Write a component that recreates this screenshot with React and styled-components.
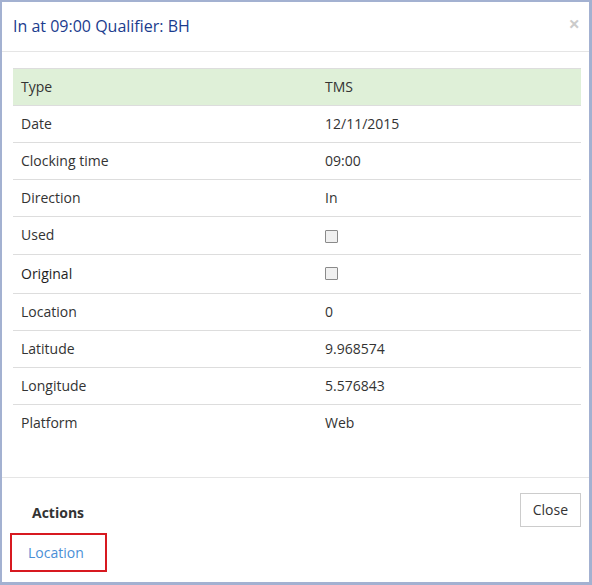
import React from 'react';
import styled, { createGlobalStyle } from 'styled-components';

const GlobalStyle = createGlobalStyle`
  html, body {
    margin: 0;
    padding: 0;
    background: #ffffff;
  }
  body {
    font-family: "Open Sans", "Liberation Sans", sans-serif;
    font-size: 14px;
    line-height: 20px;
    color: #333333;
  }
`;

const Modal = styled.div`
  box-sizing: border-box;
  width: 592px;
  height: 585px;
  border-style: solid;
  border-color: #a3b1d1;
  border-width: 2px 3px 3px 2px;
  background: #ffffff;
  display: flex;
  flex-direction: column;
`;

const Header = styled.div`
  display: flex;
  align-items: center;
  justify-content: space-between;
  height: 50px;
  padding: 0 9px 2px 11px;
  box-sizing: border-box;
  border-bottom: 1px solid #e5e5e5;
`;

const Title = styled.h4`
  margin: 0;
  font-size: 16px;
  font-weight: 400;
  line-height: 20px;
  color: #1b3c8e;
`;

const CloseX = styled.button`
  border: 0;
  background: none;
  padding: 0;
  font-family: "Open Sans", "Liberation Sans", sans-serif;
  font-size: 20px;
  font-weight: 700;
  line-height: 20px;
  color: #000000;
  opacity: 0.2;
  margin-top: -4px;
  cursor: pointer;
`;

const Body = styled.div`
  padding: 16px 8px 15px 11px;
  flex: 1;
  border-bottom: 1px solid #e5e5e5;
`;

const Table = styled.table`
  width: 100%;
  border-collapse: collapse;
  table-layout: fixed;
`;

const Row = styled.tr`
  background: ${(p) => (p.$success ? '#dff0d8' : 'transparent')};
`;

const Cell = styled.td`
  padding: ${(p) => p.$top}px 8px ${(p) => p.$bottom}px;
  border-top: 1px solid #dddddd;
  vertical-align: top;
  line-height: 20px;
  color: ${(p) => (p.$dark ? '#1e1e1e' : '#333333')};
  width: ${(p) => (p.$label ? '288px' : 'auto')};
`;

const Check = styled.span`
  display: inline-block;
  vertical-align: top;
  box-sizing: border-box;
  width: 13px;
  height: 13px;
  margin-top: ${(p) => p.$offset}px;
  border: 1px solid #8a8a8a;
  background: #f0f0f0;
  border-radius: 1px;
`;

const Footer = styled.div`
  display: flex;
  justify-content: space-between;
  align-items: flex-start;
  padding: 15px 8px 10px 8px;
`;

const ActionsCol = styled.div`
  display: flex;
  flex-direction: column;
`;

const ActionsLabel = styled.div`
  margin: 10px 0 0 22px;
  font-weight: 700;
  color: #333333;
`;

const LocationLink = styled.a`
  box-sizing: border-box;
  display: block;
  width: 97px;
  height: 39px;
  margin-top: 10px;
  padding: 8px 0 0 16px;
  border: 2px solid #d71920;
  color: #4a8fd6;
  text-decoration: none;
  cursor: pointer;
`;

const Button = styled.button`
  box-sizing: border-box;
  height: 34px;
  padding: 6px 12px;
  border: 1px solid #cccccc;
  background: #ffffff;
  font-family: "Open Sans", "Liberation Sans", sans-serif;
  font-size: 14px;
  line-height: 20px;
  color: #333333;
  cursor: pointer;
`;

const rows = [
  { label: 'Type', value: 'TMS', success: true },
  { label: 'Date', value: '12/11/2015' },
  { label: 'Clocking time', value: '09:00' },
  { label: 'Direction', value: 'In' },
  { label: 'Used', check: 5, bottom: 9 },
  { label: 'Original', check: 3, top: 9, bottom: 9, dark: true },
  { label: 'Location', value: '0' },
  { label: 'Latitude', value: '9.968574' },
  { label: 'Longitude', value: '5.576843' },
  { label: 'Platform', value: 'Web' },
];

const App = () => {
  return (
    <>
      <GlobalStyle />
      <Modal>
        <Header>
          <Title>In at 09:00 Qualifier: BH</Title>
          <CloseX type="button">×</CloseX>
        </Header>
        <Body>
          <Table>
            <tbody>
              {rows.map((r) => {
                const top = r.top || 8;
                const bottom = r.bottom || 8;
                return (
                  <Row key={r.label} $success={r.success}>
                    <Cell $label $top={top} $bottom={bottom} $dark={r.dark}>
                      {r.label}
                    </Cell>
                    <Cell $top={top} $bottom={bottom}>
                      {r.check ? <Check $offset={r.check} /> : r.value}
                    </Cell>
                  </Row>
                );
              })}
            </tbody>
          </Table>
        </Body>
        <Footer>
          <ActionsCol>
            <ActionsLabel>Actions</ActionsLabel>
            <LocationLink>Location</LocationLink>
          </ActionsCol>
          <Button type="button">Close</Button>
        </Footer>
      </Modal>
    </>
  );
};

export default App;
